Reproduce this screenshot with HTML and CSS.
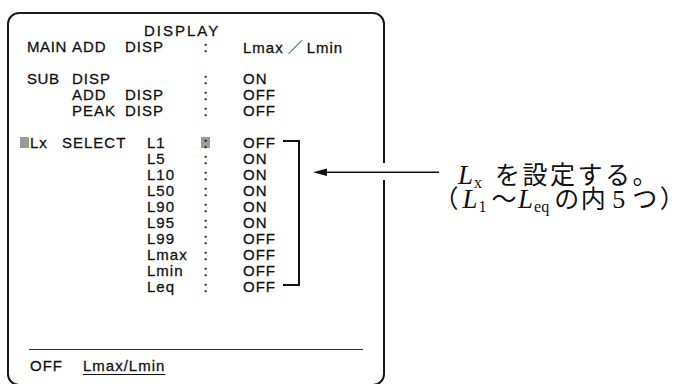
FILE: index.html
```html
<!DOCTYPE html>
<html lang="ja">
<head>
<meta charset="utf-8">
<link rel="stylesheet" href="styles.css">
</head>
<body>
<div class="page">
  <div class="panel">
    <div class="row title">DISPLAY</div>
    <div class="row"><span class="k1">MAIN</span><span class="k2">ADD</span><span class="k3">DISP</span><span class="colon">:</span><span class="val">Lmax<span class="slash">／</span>Lmin</span></div>
    <div class="row"></div>
    <div class="row"><span class="k1">SUB</span><span class="k2">DISP</span><span class="k3"></span><span class="colon">:</span><span class="val">ON</span></div>
    <div class="row"><span class="k1"></span><span class="k2">ADD</span><span class="k3">DISP</span><span class="colon">:</span><span class="val">OFF</span></div>
    <div class="row"><span class="k1"></span><span class="k2">PEAK</span><span class="k3">DISP</span><span class="colon">:</span><span class="val">OFF</span></div>
    <div class="row"></div>
    <div class="row"><span class="cursor"></span><span class="lx">Lx</span><span class="select">SELECT</span><span class="name">L1</span><span class="colon hl">:</span><span class="val">OFF</span></div>
    <div class="row item"><span class="name">L5</span><span class="colon">:</span><span class="val">ON</span></div>
    <div class="row item"><span class="name">L10</span><span class="colon">:</span><span class="val">ON</span></div>
    <div class="row item"><span class="name">L50</span><span class="colon">:</span><span class="val">ON</span></div>
    <div class="row item"><span class="name">L90</span><span class="colon">:</span><span class="val">ON</span></div>
    <div class="row item"><span class="name">L95</span><span class="colon">:</span><span class="val">ON</span></div>
    <div class="row item"><span class="name">L99</span><span class="colon">:</span><span class="val">OFF</span></div>
    <div class="row item"><span class="name">Lmax</span><span class="colon">:</span><span class="val">OFF</span></div>
    <div class="row item"><span class="name">Lmin</span><span class="colon">:</span><span class="val">OFF</span></div>
    <div class="row item"><span class="name">Leq</span><span class="colon">:</span><span class="val">OFF</span></div>
    <div class="footer"><span class="foot-off">OFF</span><span class="foot-sel">Lmax/Lmin</span></div>
  </div>
  <div class="note">
    <div class="note-line first"><span class="var">L<sub>x</sub></span><span class="jp">を設定する。</span></div>
    <div class="note-line second"><span class="jp paren">（</span><span class="var">L<sub>1</sub></span><span class="jp">〜</span><span class="var">L<sub>eq</sub></span><span class="jp">の内</span><span class="num">5</span><span class="jp">つ</span><span class="jp close">）</span></div>
  </div>
  <svg class="marks" width="682" height="384" viewBox="0 0 682 384">
    <path d="M283 141 H299 V285 H283" fill="none" stroke="#111" stroke-width="2"/>
    <rect x="382" y="163" width="6" height="17" fill="#fff"/>
    <line x1="325" y1="172.3" x2="439" y2="172.3" stroke="#111" stroke-width="1.4"/>
    <polygon points="313,172.3 327,168.5 327,176.1" fill="#111"/>
  </svg>
</div>
</body>
</html>
```

FILE: styles.css
```css
* { box-sizing: border-box; }
html, body {
  margin: 0;
  padding: 0;
  width: 682px;
  height: 384px;
  overflow: hidden;
  background: #fff;
}
.page {
  position: relative;
  width: 682px;
  height: 384px;
  display: flex;
  align-items: flex-start;
  color: #111;
}
.panel {
  flex: 0 0 378px;
  margin: 12px 0 0 7px;
  width: 378px;
  height: 374px;
  border: 2px solid #1a1a1a;
  border-radius: 12px;
  padding: 8.5px 20px 9.3px 18px;
  display: flex;
  flex-direction: column;
  font-family: "Liberation Sans", Arial, sans-serif;
  font-size: 15px;
  letter-spacing: 1px;
  -webkit-text-stroke: 0.3px #111;
}
.row {
  display: flex;
  height: 16px;
  line-height: 16px;
  white-space: pre;
}
.title { padding-left: 117px; letter-spacing: 2px; }
.k1 { width: 45px; letter-spacing: 0.6px; }
.k2 { width: 53px; }
.k3 { width: 76px; }
.colon {
  width: 9px;
  text-align: center;
  letter-spacing: 0;
}
.colon.hl {
  background: linear-gradient(to bottom, transparent 2.5px, #9a9a9a 2.5px, #9a9a9a 13.5px, transparent 13.5px);
}
.val { margin-left: 33px; }
.slash {
  display: inline-block;
  width: 23px;
  text-align: center;
  letter-spacing: 0;
  font-family: "Noto Sans CJK JP", sans-serif;
  -webkit-text-stroke: 0;
}
.cursor {
  width: 9px;
  height: 11px;
  margin: 2.5px 1px 0 -7px;
  background: #9a9a9a;
}
.lx { width: 32px; }
.select { width: 85px; }
.name { width: 54px; }
.item .name { margin-left: 120px; }
.footer {
  margin-top: auto;
  margin-left: 2px;
  border-top: 1.5px solid #333;
  padding: 8.7px 0 0 1px;
  display: flex;
  height: 26.2px;
  line-height: 16px;
}
.foot-off { width: 53px; }
.foot-sel {
  text-decoration: underline;
  text-decoration-thickness: 1px;
  text-underline-offset: 3px;
}
.note {
  flex: 0 0 auto;
  margin: 161px 0 0 61px;
  font-family: "Liberation Serif", "Noto Sans CJK JP", serif;
  font-size: 25px;
  white-space: nowrap;
}
.note-line {
  display: flex;
  align-items: baseline;
  height: 24px;
  line-height: 24px;
}
.note-line.first { padding-left: 12px; }
.jp {
  font-family: "Noto Sans CJK JP", sans-serif;
  font-size: 25px;
  letter-spacing: 2.5px;
}
.second .jp { letter-spacing: 1.5px; }
.second .paren {
  font-feature-settings: "halt";
  letter-spacing: 0;
  margin-right: 4px;
}
.second .close {
  font-feature-settings: "halt";
  letter-spacing: 0;
  margin-left: 1px;
}
.var {
  font-family: "Liberation Serif", serif;
  font-style: italic;
  font-size: 27px;
  margin-right: 5px;
}
.first .var { margin-right: 13px; }
.var sub {
  font-style: normal;
  font-size: 16px;
  vertical-align: -4px;
  line-height: 0;
  margin-left: 1px;
}
.num {
  font-family: "Liberation Serif", serif;
  font-size: 26px;
  margin: 0 7px 0 5px;
}
.marks {
  position: absolute;
  left: 0;
  top: 0;
  pointer-events: none;
}
```
